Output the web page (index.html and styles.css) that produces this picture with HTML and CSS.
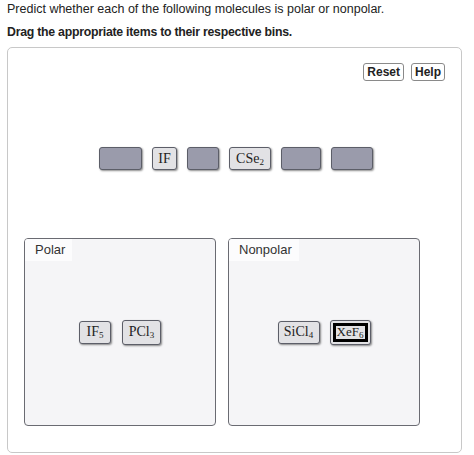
FILE: index.html
```html
<!DOCTYPE html>
<html>
<head>
<meta charset="utf-8">
<link rel="stylesheet" href="styles.css">
</head>
<body>
<p class="prompt">Predict whether each of the following molecules is polar or nonpolar.</p>
<p class="instruction">Drag the appropriate items to their respective bins.</p>
<div class="workspace">
  <div class="toolbar">
    <button class="btn">Reset</button>
    <button class="btn">Help</button>
  </div>
  <div class="pool">
    <div class="token empty w43"></div>
    <div class="token w25"><span>IF</span></div>
    <div class="token empty w32"></div>
    <div class="token w42"><span>CSe<sub>2</sub></span></div>
    <div class="token empty w40"></div>
    <div class="token empty w42"></div>
  </div>
  <div class="bins">
    <div class="bin">
      <div class="bin-label">Polar</div>
      <div class="bin-items gap11">
        <div class="token w32"><span>IF<sub>5</sub></span></div>
        <div class="token w39 tall"><span>PCl<sub>3</sub></span></div>
      </div>
    </div>
    <div class="bin">
      <div class="bin-label">Nonpolar</div>
      <div class="bin-items gap10">
        <div class="token w42"><span>SiCl<sub>4</sub></span></div>
        <div class="token w41 tall focused"><span class="focus-ring"><span>XeF<sub>6</sub></span></span></div>
      </div>
    </div>
  </div>
</div>
</body>
</html>
```
FILE: styles.css
```css
html, body {
  margin: 0;
  padding: 0;
  background: #fff;
}
body {
  padding: 0 12px 0 7px;
  font-family: "Liberation Sans", Arial, sans-serif;
  color: #222;
}
.prompt {
  margin: 0;
  padding-top: 1px;
  font-size: 12.5px;
  line-height: 16px;
}
.instruction {
  margin: 7px 0 0 0;
  font-size: 12.3px;
  letter-spacing: -0.25px;
  line-height: 16px;
  font-weight: bold;
}
.workspace {
  margin-top: 7px;
  height: 404px;
  border: 1px solid #c8c8c8;
  border-radius: 5px;
  box-sizing: content-box;
}
.toolbar {
  display: flex;
  justify-content: flex-end;
  gap: 7px;
  padding: 15px 16px 0 0;
}
.btn {
  height: 18px;
  margin: 0;
  padding: 0 3px;
  border: 1px solid #8a8a8a;
  border-radius: 3px;
  background: #fff;
  font-family: "Liberation Sans", Arial, sans-serif;
  font-weight: bold;
  font-size: 12px;
  line-height: 16px;
  color: #222;
}
.pool {
  display: flex;
  gap: 10px;
  padding-left: 91px;
  margin-top: 66px;
}
.token {
  height: 23px;
  box-sizing: border-box;
  border: 1px solid #5c5e68;
  border-radius: 3px;
  background: #e2e2e5;
  box-shadow: 1px 1px 2px rgba(0, 0, 0, 0.45);
  font-family: "Liberation Serif", "Times New Roman", serif;
  font-size: 14px;
  line-height: 16px;
  color: #222;
  display: flex;
  align-items: center;
  justify-content: center;
}
.token sub {
  font-size: 9px;
  line-height: 0;
  vertical-align: -2px;
}
.token.tall { height: 25px; }
.token.empty { background: #9a9bab; }
.w25 { width: 25px; }
.w32 { width: 32px; }
.w39 { width: 39px; }
.w40 { width: 40px; }
.w41 { width: 41px; }
.w42 { width: 42px; }
.w43 { width: 43px; }
.bins {
  display: flex;
  gap: 12px;
  padding-left: 16px;
  margin-top: 68px;
}
.bin {
  width: 192px;
  height: 188px;
  box-sizing: border-box;
  border: 1px solid #6a6b72;
  border-radius: 4px;
  background: #f5f5f7;
  display: flex;
  flex-direction: column;
}
.bin-label {
  align-self: flex-start;
  background: #fcfcfd;
  padding: 4px 7px 4px 10px;
  font-size: 13px;
  line-height: 14px;
  color: #333;
  border-top-left-radius: 3px;
}
.bin-items {
  flex: 1;
  display: flex;
  align-items: center;
  justify-content: center;
  padding-bottom: 22px;
}
.gap11 { gap: 11px; }
.gap10 { gap: 10px; }
.focused {
  padding: 2px;
}
.focus-ring {
  flex: 1;
  align-self: stretch;
  border: 3px solid #000;
  display: flex;
  align-items: center;
  justify-content: center;
  font-size: 13px;
}
```
